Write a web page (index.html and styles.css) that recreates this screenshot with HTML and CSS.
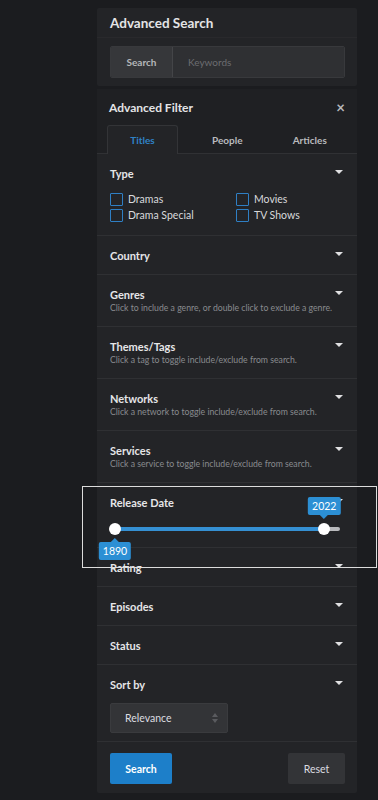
FILE: index.html
```html
<!DOCTYPE html>
<html lang="en">
<head>
    <meta charset="UTF-8">
    <meta name="viewport" content="width=device-width, initial-scale=1.0">
    <title>Advanced Search</title>
    <link rel="stylesheet" href="styles.css">
</head>
<body>
    <aside class="sidebar">
        <div class="card">
            <div class="card-header">Advanced Search</div>
            <div class="card-body">
                <div class="search-group">
                    <span class="search-addon">Search</span>
                    <input type="text" class="search-input" placeholder="Keywords">
                </div>
            </div>
        </div>

        <div class="card filter-card">
            <div class="filter-header">
                <span>Advanced Filter</span>
                <span class="close">&times;</span>
            </div>
            <div class="tabs">
                <span class="tab active">Titles</span>
                <span class="tab">People</span>
                <span class="tab">Articles</span>
            </div>

            <div class="section">
                <div class="section-title">Type <i class="caret"></i></div>
                <div class="checks">
                    <label class="check"><span class="box"></span>Dramas</label>
                    <label class="check"><span class="box"></span>Movies</label>
                    <label class="check"><span class="box"></span>Drama Special</label>
                    <label class="check"><span class="box"></span>TV Shows</label>
                </div>
            </div>

            <div class="section">
                <div class="section-title">Country <i class="caret"></i></div>
            </div>

            <div class="section with-desc">
                <div class="section-title">Genres <i class="caret"></i></div>
                <div class="section-desc">Click to include a genre, or double click to exclude a genre.</div>
            </div>

            <div class="section with-desc">
                <div class="section-title">Themes/Tags <i class="caret"></i></div>
                <div class="section-desc">Click a tag to toggle include/exclude from search.</div>
            </div>

            <div class="section with-desc">
                <div class="section-title">Networks <i class="caret"></i></div>
                <div class="section-desc">Click a network to toggle include/exclude from search.</div>
            </div>

            <div class="section with-desc">
                <div class="section-title">Services <i class="caret"></i></div>
                <div class="section-desc">Click a service to toggle include/exclude from search.</div>
            </div>

            <div class="section release highlighted">
                <div class="section-title">Release Date <i class="caret"></i></div>
                <div class="slider">
                    <div class="track">
                        <div class="range" style="width: 93%"></div>
                        <span class="handle" style="left: 0%"><span class="tip tip-below">1890</span></span>
                        <span class="handle" style="left: 93%"><span class="tip tip-above">2022</span></span>
                    </div>
                </div>
            </div>

            <div class="section">
                <div class="section-title">Rating <i class="caret"></i></div>
            </div>

            <div class="section">
                <div class="section-title">Episodes <i class="caret"></i></div>
            </div>

            <div class="section">
                <div class="section-title">Status <i class="caret"></i></div>
            </div>

            <div class="section sort">
                <div class="section-title">Sort by <i class="caret"></i></div>
                <div class="select">
                    <span>Relevance</span>
                    <span class="updown"><i class="up"></i><i class="down"></i></span>
                </div>
            </div>

            <div class="footer">
                <button class="btn btn-primary">Search</button>
                <button class="btn btn-default">Reset</button>
            </div>
        </div>
    </aside>
</body>
</html>
```

FILE: styles.css
```css
:root {
    --bg: #1b1c1f;
    --panel: #232427;
    --line: #2f3033;
    --blue: #1d7fc9;
    --text: #e4e4e6;
    --muted: #898b8f;
}

* {
    box-sizing: border-box;
    margin: 0;
    padding: 0;
}

body {
    font-family: Lato, "Liberation Sans", sans-serif;
    background-color: var(--bg);
    color: var(--text);
    padding: 8px 0 0 97px;
}

.sidebar {
    width: 260px;
}

.card {
    background-color: var(--panel);
    border-radius: 2px;
}

.card-header {
    height: 30px;
    padding: 0 13px;
    display: flex;
    align-items: center;
    font-size: 13.5px;
    font-weight: 700;
    border-bottom: 1px solid #29292c;
}

.card-body {
    padding: 8px 12px 8px 13px;
}

.search-group {
    display: flex;
    height: 32px;
    border-radius: 2px;
    overflow: hidden;
    border: 1px solid #38393c;
}

.search-addon {
    width: 62px;
    display: flex;
    align-items: center;
    justify-content: center;
    background-color: #36373a;
    color: #b4b6b9;
    font-size: 10px;
    font-weight: 700;
    border-right: 1px solid #444548;
}

.search-input {
    flex: 1;
    background-color: #2f3033;
    border: none;
    outline: none;
    padding: 0 15px;
    font-family: inherit;
    font-size: 10px;
    color: var(--text);
}

.search-input::placeholder {
    color: #6c6d71;
}

.filter-card {
    margin-top: 3px;
    padding-bottom: 2px;
}

.filter-header {
    height: 36px;
    padding: 0 12px 0 12px;
    display: flex;
    align-items: center;
    justify-content: space-between;
    font-size: 12px;
    font-weight: 700;
    background-color: #1f2023;
}

.close {
    font-size: 15px;
    color: #b7b8bb;
    line-height: 1;
}

.tabs {
    display: flex;
    gap: 8px;
    padding: 0 10px;
    background-color: #1f2023;
    border-bottom: 1px solid #303134;
}

.tab {
    flex: 1;
    height: 29px;
    display: flex;
    align-items: center;
    justify-content: center;
    font-size: 10px;
    font-weight: 700;
    color: #b9babd;
    border: 1px solid transparent;
    border-bottom: none;
    border-radius: 3px 3px 0 0;
    margin-bottom: -1px;
}

.tab.active {
    color: #2f82c6;
    background-color: var(--panel);
    border-color: #333437;
    flex: 0 0 71px;
    margin-right: 4px;
}

.section {
    padding: 13px 13px 12px;
    border-bottom: 1px solid var(--line);
}

.section.with-desc {
    padding-bottom: 11px;
}

.section-title {
    display: flex;
    justify-content: space-between;
    align-items: center;
    height: 13px;
    font-size: 11px;
    font-weight: 700;
    color: #e6e6e8;
}

.caret {
    width: 0;
    height: 0;
    border-left: 4px solid transparent;
    border-right: 4px solid transparent;
    border-top: 4px solid #e0e0e2;
    margin: -4px 1px 0 0;
}

.section-desc {
    font-size: 8.7px;
    color: var(--muted);
    line-height: 14px;
}

.checks {
    display: grid;
    grid-template-columns: 126px 1fr;
    margin-top: 11px;
}

.check {
    height: 16px;
    display: flex;
    align-items: center;
    font-size: 10.5px;
    color: #d8d9dc;
}

.box {
    width: 13px;
    height: 13px;
    border: 1.5px solid #2f7fc4;
    border-radius: 1px;
    margin-right: 5px;
}

.release {
    padding-bottom: 0;
    height: 65px;
}

.highlighted {
    position: relative;
}

.highlighted::after {
    content: "";
    position: absolute;
    left: -15px;
    right: -20px;
    top: 3px;
    height: 80px;
    border: 1px solid #dcdcdc;
    pointer-events: none;
}

.slider {
    padding: 18px 4px 0 5px;
}

.track {
    position: relative;
    height: 4px;
    background-color: #b9babd;
    border-radius: 2px;
}

.range {
    height: 100%;
    background-color: #3590d3;
    border-radius: 2px 0 0 2px;
}

.handle {
    position: absolute;
    top: 50%;
    width: 12px;
    height: 12px;
    margin: -6px 0 0 -6px;
    background-color: #fff;
    border-radius: 50%;
}

.tip {
    position: absolute;
    left: 50%;
    transform: translateX(-50%);
    background-color: #2c8fd4;
    color: #fff;
    font-size: 10.5px;
    padding: 0 4px;
    height: 18px;
    line-height: 18px;
    border-radius: 2px;
    z-index: 2;
}

.tip::after {
    content: "";
    position: absolute;
    left: 50%;
    margin-left: -4px;
    border-left: 4px solid transparent;
    border-right: 4px solid transparent;
}

.tip-above {
    bottom: 20px;
}

.tip-above::after {
    top: 100%;
    border-top: 4px solid #2c8fd4;
}

.tip-below {
    top: 19px;
}

.tip-below::after {
    bottom: 100%;
    border-bottom: 4px solid #2c8fd4;
}

.sort {
    padding-bottom: 8px;
}

.select {
    margin-top: 12px;
    width: 118px;
    height: 30px;
    display: flex;
    align-items: center;
    justify-content: space-between;
    padding: 0 9px 0 14px;
    background-color: #333437;
    border: 1px solid #3a3b3e;
    border-radius: 2px;
    font-size: 10.5px;
    color: #dcdde0;
}

.updown {
    display: flex;
    flex-direction: column;
    gap: 2px;
}

.updown i {
    width: 0;
    height: 0;
    border-left: 3px solid transparent;
    border-right: 3px solid transparent;
}

.updown .up {
    border-bottom: 4px solid #5a5b5f;
}

.updown .down {
    border-top: 4px solid #5a5b5f;
}

.footer {
    display: flex;
    justify-content: space-between;
    padding: 11px 12px 7px 13px;
}

.btn {
    height: 31px;
    border: none;
    border-radius: 2px;
    font-family: inherit;
    font-size: 10.5px;
}

.btn-primary {
    width: 62px;
    background-color: var(--blue);
    color: #fff;
    font-weight: 700;
}

.btn-default {
    width: 57px;
    background-color: #333437;
    color: #dcdde0;
}
```
